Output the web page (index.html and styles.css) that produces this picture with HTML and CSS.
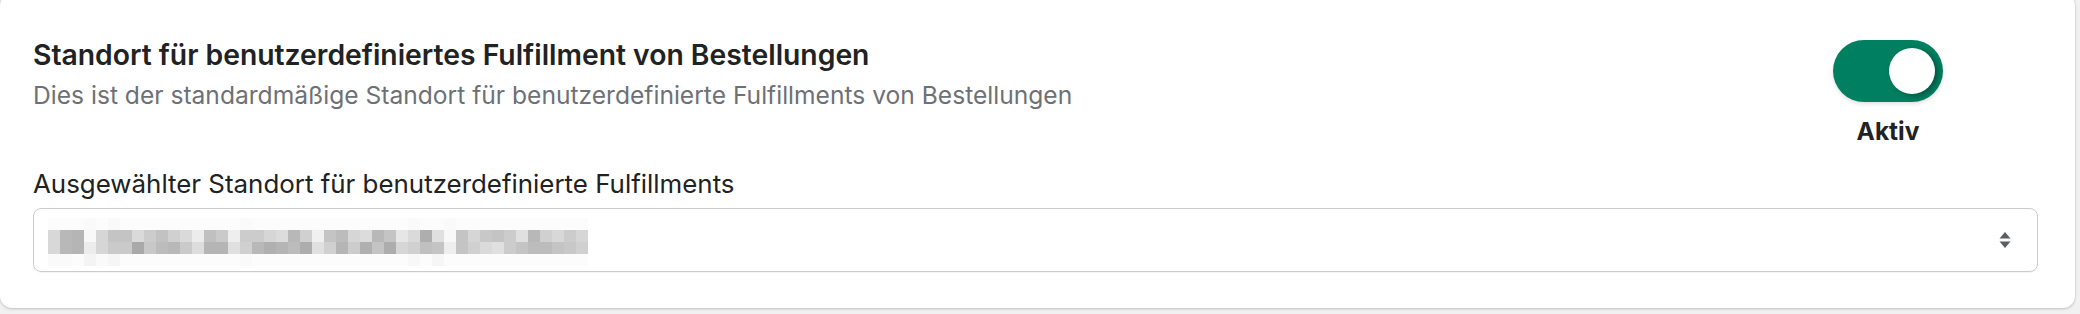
FILE: index.html
```html
<!DOCTYPE html>
<html lang="de">
<head>
    <meta charset="UTF-8">
    <meta name="viewport" content="width=device-width, initial-scale=1.0">
    <title>Standort für Fulfillment</title>
    <link rel="stylesheet" href="styles.css">
</head>
<body>

    <div class="card">
        <div class="card-head">
            <div class="card-text">
                <h2 class="card-title">Standort für benutzerdefiniertes Fulfillment von Bestellungen</h2>
                <p class="card-sub">Dies ist der standardmäßige Standort für benutzerdefinierte Fulfillments von Bestellungen</p>
            </div>
            <div class="toggle-wrap">
                <div class="toggle on">
                    <span class="knob"></span>
                </div>
                <div class="toggle-label">Aktiv</div>
            </div>
        </div>

        <label class="field-label" for="location">Ausgewählter Standort für benutzerdefinierte Fulfillments</label>
        <div class="select" id="location">
            <div class="blurred" id="blurred"></div>
            <svg class="select-arrows" width="12" height="18" viewBox="0 0 12 18">
                <path d="M6 1 L11.5 7.5 H0.5 Z" fill="#5c5f62"/>
                <path d="M6 17 L11.5 10.5 H0.5 Z" fill="#5c5f62"/>
            </svg>
        </div>
    </div>

    <script src="script.js"></script>
</body>
</html>
```

FILE: styles.css
```css
body {
    font-family: 'Inter', 'Noto Sans', sans-serif;
    background-color: #f1f1f1;
    color: #202223;
    margin: 0;
    padding: 0 5px 6px 0;
}

.card {
    background-color: #ffffff;
    border-radius: 12px;
    margin-top: -6px;
    padding: 45px 37px 36px 33px;
    box-shadow: 0 1px 3px rgba(0, 0, 0, 0.18), 0 0 0 1px rgba(0, 0, 0, 0.03);
}

.card-head {
    display: flex;
    justify-content: space-between;
    align-items: flex-start;
}

.card-title {
    font-size: 28.3px;
    font-weight: 600;
    line-height: 32px;
    margin: 0;
}

.card-sub {
    font-size: 24.6px;
    line-height: 28px;
    color: #6d7175;
    margin: 10px 0 0;
}

.toggle-wrap {
    display: flex;
    flex-direction: column;
    align-items: center;
    margin-top: 1px;
    margin-right: 95px;
}

.toggle {
    width: 110px;
    height: 62px;
    border-radius: 31px;
    background-color: #008060;
    box-shadow: 0 2px 4px rgba(0, 0, 0, 0.12);
    display: flex;
    align-items: center;
    padding: 0 8px;
    box-sizing: border-box;
}

.toggle.on {
    justify-content: flex-end;
}

.knob {
    width: 46px;
    height: 46px;
    border-radius: 50%;
    background-color: #ffffff;
    box-shadow: 3px 2px 6px rgba(0, 0, 0, 0.35);
}

.toggle-label {
    font-size: 24.5px;
    font-weight: 700;
    line-height: 28px;
    margin-top: 15px;
}

.field-label {
    display: block;
    font-size: 25.9px;
    line-height: 30px;
    margin-top: 24px;
}

.select {
    margin-top: 9px;
    height: 64px;
    border: 1px solid #c9cccf;
    border-radius: 8px;
    box-sizing: border-box;
    display: flex;
    align-items: center;
    justify-content: space-between;
    padding: 4px 26px 0 14px;
    box-shadow: 0 1px 0 rgba(0, 0, 0, 0.04);
}

.blurred {
    display: grid;
    grid-template-columns: repeat(45, 12px);
    grid-auto-rows: 12px;
}

.select-arrows {
    margin-top: -4px;
}
```

FILE: script.js
```js
// pixelated placeholder for the hidden address
const rows = [
    "fc fc fc fa fc f9 fc fc fc fc fc fc fc fc fc fc fa fc fc fc fc fc fc fc fc fc fc fc fc fc fa fc fc fa fc fc fc fc fc fc fc fc fc fc fc",
    "d8 b8 b5 f8 d6 c4 c4 da cc c2 d0 da ec c0 ca ee cc cc d6 dc b8 d0 f0 c4 bc d6 dc b8 c4 e6 da ae e0 f8 c4 d6 c8 c4 cc e0 b8 d0 d8 cc d6",
    "d8 b8 b5 ec d6 ca ca a9 c8 bc b8 ca dd b5 b5 e0 d0 b8 b0 b5 bc ad e0 d0 b5 cc b0 c4 ad d6 d0 c0 c4 ee c4 d0 da e0 cc c4 bc bc c4 c8 d0",
    "fa fa fc f4 fa f6 fc fc fc fc fc fc fc fc fc fc fa fc fc fc fc fc fc fc fc fc fc fc fc fc f8 fc f6 fc fc fc fc fc fc fc fc fc fc fc fc"
];

const blurred = document.getElementById('blurred');

rows.forEach(row => {
    row.split(' ').forEach(v => {
        const cell = document.createElement('span');
        cell.style.background = '#' + v + v + v;
        blurred.appendChild(cell);
    });
});
```
